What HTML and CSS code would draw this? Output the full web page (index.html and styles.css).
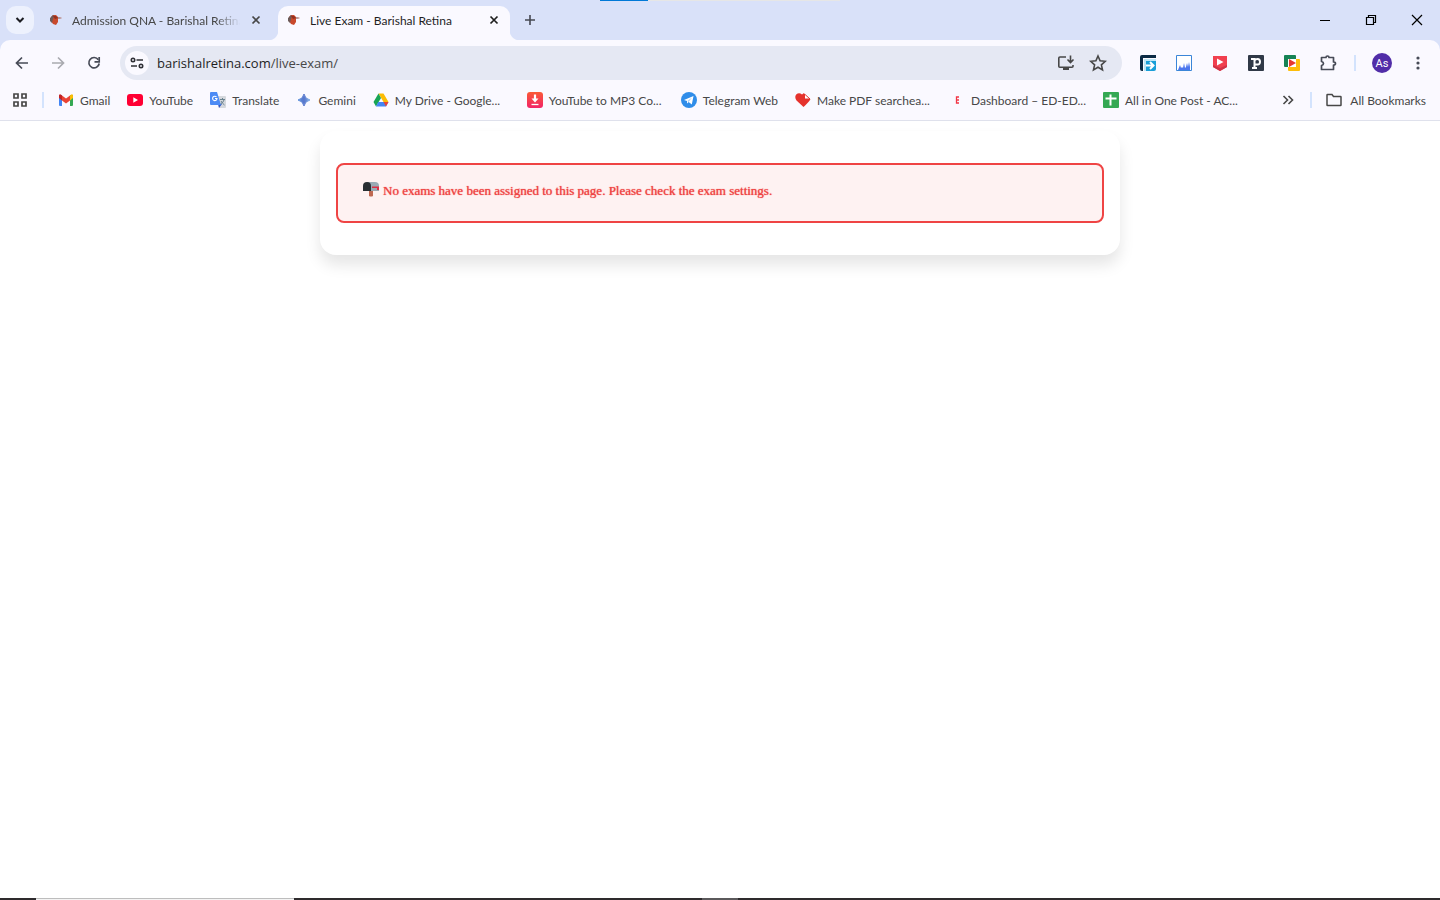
FILE: index.html
```html
<!DOCTYPE html>
<html lang="en">
<head>
    <meta charset="UTF-8">
    <title>Live Exam - Barishal Retina</title>
    <link rel="stylesheet" href="styles.css">
</head>
<body>
    <svg class="defs" width="0" height="0">
        <symbol id="bird" viewBox="0 0 16 16">
            <path d="M3 5 5 3 8 3 10 5 14 6 10 7 10 10 8 13 5 12 3 9z" fill="#c9492c"/>
            <path d="M2 6 5 3 6 4 5 7 4 11 2 9z" fill="#6d5a58"/>
            <path d="M5 4h3l2 2-3 1z" fill="#93311f"/>
            <path d="M10 5l4 1-4 1z" fill="#a9a2aa"/>
        </symbol>
        <symbol id="cross" viewBox="0 0 16 16">
            <path d="M4.500 4.500l7 7m0-7l-7 7" fill="none" stroke="currentColor" stroke-width="1.700"/>
        </symbol>
    </svg>

    <header class="browser">
        <div class="progress"><div class="progress-val"></div></div>

        <div class="tabs">
            <button class="tab-search" aria-label="Search tabs">
                <svg width="16" height="16" viewBox="0 0 16 16"><path d="M4.500 6l3.500 3.500L11.500 6" fill="none" stroke="#1c1d22" stroke-width="2"/></svg>
            </button>
            <div class="tab">
                <svg class="icon"><use href="#bird"/></svg>
                <span class="tab-title fade">Admission QNA - Barishal Retina</span>
                <button class="tab-close" aria-label="Close tab"><svg class="icon"><use href="#cross"/></svg></button>
            </div>
            <div class="tab active">
                <svg class="icon"><use href="#bird"/></svg>
                <span class="tab-title">Live Exam - Barishal Retina</span>
                <button class="tab-close" aria-label="Close tab"><svg class="icon"><use href="#cross"/></svg></button>
            </div>
            <button class="new-tab" aria-label="New tab">
                <svg width="16" height="16" viewBox="0 0 16 16"><path d="M8 3v10M3 8h10" stroke="#454852" stroke-width="1.600"/></svg>
            </button>
            <div class="window-btns">
                <button aria-label="Minimize"><svg width="12" height="12" viewBox="0 0 12 12"><path d="M1 6.500h10" stroke="#000"/></svg></button>
                <button aria-label="Restore"><svg width="12" height="12" viewBox="0 0 12 12"><path d="M1.500 3.500h7v7h-7zM3.500 3V1.500h7v7H9" fill="none" stroke="#000" stroke-width="1.200"/></svg></button>
                <button aria-label="Close"><svg width="12" height="12" viewBox="0 0 12 12"><path d="M1 1l10 10M11 1L1 11" stroke="#000" stroke-width="1.200"/></svg></button>
            </div>
        </div>

        <div class="toolbar">
            <button class="nav-btn" aria-label="Back"><svg width="16" height="16" viewBox="0 0 16 16"><path d="M14 8H3M8 2.500L2.500 8 8 13.500" fill="none" stroke="#474b57" stroke-width="1.700"/></svg></button>
            <button class="nav-btn" aria-label="Forward"><svg width="16" height="16" viewBox="0 0 16 16"><path d="M2 8h11M8 2.500L13.500 8 8 13.500" fill="none" stroke="#a9aab0" stroke-width="1.700"/></svg></button>
            <button class="nav-btn" aria-label="Reload"><svg width="16" height="16" viewBox="0 0 16 16"><path d="M12.300 4.700A5.200 5.200 0 1 0 13.200 8.500" fill="none" stroke="#474b57" stroke-width="1.700"/><path d="M13.200 2v4.800H8.500" fill="none" stroke="#474b57" stroke-width="1.700"/></svg></button>
            <div class="address">
                <button class="site-info" aria-label="Site information">
                    <svg width="16" height="16" viewBox="0 0 16 16" fill="none" stroke="#2f3036" stroke-width="1.600"><circle cx="4" cy="5" r="1.700"/><path d="M7.500 5H14M2 11h6"/><circle cx="12" cy="11" r="1.700"/></svg>
                </button>
                <div class="url" role="textbox" aria-label="Address" contenteditable="true" spellcheck="false"><b>barishalretina.com</b>/live-exam/</div>
                <button class="addr-btn" aria-label="Install app">
                    <svg width="18" height="18" viewBox="0 0 18 18" fill="none" stroke="#474747" stroke-width="1.600"><path d="M9 3H3Q1.800 3 1.800 4v8.200q0 1 1 1H15q1 0 1-1V11M13.500 1.500v6.500M10.500 5.500l3 3 3-3"/><path d="M6 14.500h6" stroke-width="3"/></svg>
                </button>
                <button class="addr-btn" aria-label="Bookmark this tab">
                    <svg width="18" height="18" viewBox="0 0 18 18"><path d="M9 2l2.100 4.800 5.200.5-3.900 3.500 1.100 5.100L9 13.200l-4.500 2.700 1.100-5.100L1.700 7.300l5.200-.5z" fill="none" stroke="#474747" stroke-width="1.600"/></svg>
                </button>
            </div>
            <div class="extensions">
                <button aria-label="Tab export">
                    <svg class="icon" viewBox="0 0 16 16"><path d="M0 2Q0 0 2 0h14v3H3v13H2q-2 0-2-2z" fill="#0b2a45"/><path d="M4 4h12v2H6v10H4z" fill="#bfe6f5"/><path d="M6 6h10v8q0 2-2 2H6z" fill="#1a9fd8"/><path d="M6 10.500h7M10 7l3.500 3.500L10 14" fill="none" stroke="#fff" stroke-width="2"/></svg>
                </button>
                <button aria-label="Chart">
                    <svg class="icon" viewBox="0 0 16 16"><path d="M.5.5h15v15H.5z" fill="#fff" stroke="#3b86d8"/><path d="M2 15l2-5 1 3 1-1 1 1 1-5 1 5 1-1 1-4 1 4 1-5 1 5v3z" fill="#4d78ee"/></svg>
                </button>
                <button aria-label="Video">
                    <svg class="icon" viewBox="0 0 16 16"><path d="M1 1h14v11l-7 4-7-4z" fill="#f1404f"/><path d="M1 10l7 3 7-3v2l-7 4-7-4z" fill="#cf3447"/><path d="M5 3.500v7L11.500 7z" fill="#fff"/></svg>
                </button>
                <button aria-label="Picture in picture">
                    <svg class="icon" viewBox="0 0 16 16"><rect width="16" height="16" rx="1" fill="#303947"/><path d="M3 4h3.500v9M4 13h5M6.500 5.500Q7.500 4 9.500 4 12 4 12 6.800T9.500 9.500H7" fill="none" stroke="#fff" stroke-width="2"/></svg>
                </button>
                <button aria-label="Player">
                    <svg class="icon" viewBox="0 0 16 16"><rect width="12" height="12" rx="1" fill="#168355"/><rect x="4" y="4" width="12" height="12" rx="1" fill="#fdbd0a"/><path d="M4 4h8v8H4z" fill="#fff"/><path d="M5 4v8l7-4z" fill="#e63831"/></svg>
                </button>
                <button aria-label="Extensions">
                    <svg width="18" height="18" viewBox="0 0 18 18"><path d="M2.500 3.500h4.500Q7 2 8.500 2t1.500 1.500h4.500V8q2 0 2 1.500t-2 1.500v4.500h-12v-4q2-.5 2-2t-2-2z" fill="none" stroke="#474b57" stroke-width="1.700" stroke-linejoin="round"/></svg>
                </button>
            </div>
            <span class="line"></span>
            <button class="avatar">As</button>
            <button class="menu" aria-label="Menu"><svg width="16" height="16" viewBox="0 0 16 16" fill="#474b57"><circle cx="8" cy="3" r="1.600"/><circle cx="8" cy="8" r="1.600"/><circle cx="8" cy="13" r="1.600"/></svg></button>
        </div>

        <nav class="bookmarks">
            <button class="apps" aria-label="Apps"><svg class="icon" viewBox="0 0 16 16"><path d="M2 2h4v4H2zM10 2h4v4h-4zM2 10h4v4H2zM10 10h4v4h-4z" fill="none" stroke="#474747" stroke-width="1.700"/></svg></button>
            <span class="line"></span>
            <a href="#" class="bookmark">
                <svg class="icon" viewBox="0 0 16 16"><path d="M1 3h3v11H2q-1 0-1-1z" fill="#4285f4"/><path d="M12 3h3v10q0 1-1 1h-2z" fill="#34a853"/><path d="M12 3.500Q15 1 15 4v2l-3 2.500z" fill="#fbbc04"/><path d="M4 3.500Q1 1 1 4v2l3 2.500z" fill="#c5221f"/><path d="M4 3.500l4 3 4-3v5l-4 3-4-3z" fill="#ea4335"/></svg>
                <span>Gmail</span>
            </a>
            <a href="#" class="bookmark">
                <svg class="icon" viewBox="0 0 16 16"><rect y="2" width="16" height="12" rx="3" fill="#ff0033"/><path d="M6.300 5.300v5.400L11 8z" fill="#fff"/></svg>
                <span>YouTube</span>
            </a>
            <a href="#" class="bookmark">
                <svg class="icon" viewBox="0 0 16 16"><path d="M6 4h9q1 0 1 1v10q0 1-1 1H9z" fill="#d5d8dd"/><path d="M8 12h4l-3 4z" fill="#3158c8"/><path d="M1 0h6l4 13H1q-1 0-1-1V1q0-1 1-1z" fill="#4c8bf5"/><path d="M6.500 5A2.200 2.200 0 1 0 7 6.500H5" fill="none" stroke="#fff" stroke-width="1.100"/><path d="M10 7.500h5M12.500 6v1.500M14 8q-1 3-3.500 4M11 9q1 2 3.500 4" fill="none" stroke="#68818e"/></svg>
                <span>Translate</span>
            </a>
            <a href="#" class="bookmark">
                <svg class="icon" viewBox="0 0 16 16"><defs><linearGradient id="gem"><stop offset="0" stop-color="#5b91dc"/><stop offset=".5" stop-color="#5876cc"/><stop offset="1" stop-color="#7baee5"/></linearGradient></defs><path d="M8 2q1 5 6 6-5 1-6 6-1-5-6-6 5-1 6-6z" fill="url(#gem)" stroke="url(#gem)"/></svg>
                <span>Gemini</span>
            </a>
            <a href="#" class="bookmark long">
                <svg class="icon" viewBox="0 0 16 16"><path d="M5.500 1.500h5L15.500 10h-5z" fill="#fbbc04"/><path d="M5.500 1.500L8 6l-5 8.500L.5 10z" fill="#18a454"/><path d="M5.200 10h10.300L13 14.500H3z" fill="#4285f4"/><path d="M15.500 10L13 14.500 10.500 10z" fill="#ea4335"/></svg>
                <span>My Drive - Google...</span>
            </a>
            <a href="#" class="bookmark long">
                <svg class="icon" viewBox="0 0 16 16"><defs><linearGradient id="mp3" x2="0" y2="1"><stop offset="0" stop-color="#fa5a36"/><stop offset="1" stop-color="#f22468"/></linearGradient></defs><rect width="16" height="16" rx="3" fill="url(#mp3)"/><path d="M8 2.500V7" stroke="#fff" stroke-width="2.200"/><path d="M4.500 6.500h7L8 10.500z" fill="#fff"/><path d="M4.500 12.500h7" stroke="#fff" stroke-width="1.300"/></svg>
                <span>YouTube to MP3 Co...</span>
            </a>
            <a href="#" class="bookmark">
                <svg class="icon" viewBox="0 0 16 16"><circle cx="8" cy="8" r="8" fill="#2f8de9"/><path d="M3 8l9.500-4-1.700 8.500L7.700 10 6 11.500V9z" fill="#fff"/><path d="M6.500 9L11 5.500 7.500 10z" fill="#9ccbf6"/></svg>
                <span>Telegram Web</span>
            </a>
            <a href="#" class="bookmark long">
                <svg class="icon" viewBox="0 0 16 16"><path d="M8.500 15L1.500 8.500Q-.8 5 1.200 2.500 4 0 7 2.500L9 1l1 5.500 5.500.5Q14 10 8.500 15z" fill="#e5322d"/><path d="M9.500 2l5.500 5H9.500z" fill="#fff" stroke="#e5322d"/></svg>
                <span>Make PDF searchea...</span>
            </a>
            <a href="#" class="bookmark long">
                <svg class="icon" viewBox="0 0 16 16"><path d="M10 5H7.500v6H10M7.500 8H10" fill="none" stroke="#f23645" stroke-width="1.300"/></svg>
                <span>Dashboard – ED-ED...</span>
            </a>
            <a href="#" class="bookmark long">
                <svg class="icon" viewBox="0 0 16 16"><rect width="16" height="16" rx="1" fill="#34a853"/><path d="M7.500 2.500v11M2.500 6.500h11" stroke="#fff" stroke-width="2"/></svg>
                <span>All in One Post - AC...</span>
            </a>
            <button class="more" aria-label="More bookmarks"><svg class="icon" viewBox="0 0 16 16"><path d="M3.500 4l4 4-4 4M8.500 4l4 4-4 4" fill="none" stroke="#474747" stroke-width="1.600"/></svg></button>
            <span class="line"></span>
            <a href="#" class="bookmark all">
                <svg class="icon" viewBox="0 0 16 16"><path d="M1 3q0-.5.500-.5h4.500l1.500 2h7q.5 0 .5.500v8q0 .5-.5.500h-13q-.5 0-.5-.5z" fill="none" stroke="#474747" stroke-width="1.500"/></svg>
                <span>All Bookmarks</span>
            </a>
        </nav>
    </header>

    <main class="page">
        <div class="card">
            <div class="notice">
                <svg class="mailbox" width="16" height="16" viewBox="0 0 16 16"><path d="M6 8h4v7q-2 1-4 0z" fill="#bf6952"/><path d="M4 1h8q4 0 4 4v5H4z" fill="#9aaab4"/><path d="M0 5q0-4 4-4t4 4v5H0z" fill="#292f33"/><path d="M9 5.500h7V9h-2V7H9z" fill="#dd2e44"/></svg>
                <p>No exams have been assigned to this page. Please check the exam settings.</p>
            </div>
        </div>
    </main>

    <footer class="taskbar"><span class="task"></span><span class="handle"></span></footer>
</body>
</html>
```
FILE: styles.css
```css
*{
    box-sizing: border-box;
    margin: 0;
    padding: 0;
}

body{
    display: flex;
    flex-direction: column;
    min-height: 100vh;
    background: #fff;
    font-family: Lato, "Open Sans", sans-serif;
    font-size: 12px;
    color: #474747;
}

button{
    display: flex;
    align-items: center;
    justify-content: center;
    border: 0;
    background: none;
    font: inherit;
    color: inherit;
}

a{
    text-decoration: none;
    color: inherit;
}

svg{
    display: block;
    flex: none;
}

.defs{
    position: absolute;
}

.icon{
    width: 16px;
    height: 16px;
}

.browser{
    position: relative;
    background: #d9e1f9;
    border-bottom: 1px solid #dfe1ec;
}

.progress{
    position: absolute;
    top: 0;
    left: 50%;
    width: 240px;
    height: 1px;
    margin-left: -120px;
    background: #e6e6e6;
}

.progress-val{
    width: 20%;
    height: 1px;
    background: #0078d7;
}

/* tabs */
.tabs{
    display: flex;
    height: 40px;
    padding: 6px 0 0 6px;
}

.tab-search{
    width: 28px;
    height: 28px;
    margin-right: 4px;
    border-radius: 10px;
    background: #edf1fd;
}

.tab{
    position: relative;
    display: flex;
    align-items: center;
    gap: 8px;
    width: 240px;
    height: 34px;
    padding: 0 14px 6px 10px;
}

.tab.active{
    width: 232px;
    padding: 0 8px 6px 8px;
    border-radius: 10px 10px 0 0;
    background: #faf9ff;
    color: #1f1f1f;
}

.tab.active:before,
.tab.active:after{
    content: "";
    position: absolute;
    bottom: 0;
    width: 10px;
    height: 10px;
}

.tab.active:before{
    right: 100%;
    background: radial-gradient(circle at 0 0, #d9e1f9 10px, #faf9ff 11px);
}

.tab.active:after{
    left: 100%;
    background: radial-gradient(circle at 100% 0, #d9e1f9 10px, #faf9ff 11px);
}

.tab-title{
    flex: 1;
    overflow: hidden;
    white-space: nowrap;
}

.fade{
    -webkit-mask-image: linear-gradient(to left, transparent, #000 24px);
    mask-image: linear-gradient(to left, transparent, #000 24px);
}

.new-tab{
    width: 28px;
    height: 28px;
    margin-left: 6px;
}

.window-btns{
    display: flex;
    height: 28px;
    margin-left: auto;
}

.window-btns button{
    width: 46px;
}

/* toolbar */
.toolbar{
    display: flex;
    align-items: center;
    height: 46px;
    padding: 0 8px;
    border-radius: 10px 10px 0 0;
    background: #faf9ff;
}

.nav-btn{
    width: 28px;
    height: 28px;
    margin-right: 8px;
}

.address{
    display: flex;
    align-items: center;
    flex: 1;
    height: 34px;
    margin-left: 4px;
    padding: 0 8px 0 5px;
    border-radius: 17px;
    background: #e5e8f3;
}

.site-info{
    width: 24px;
    height: 24px;
    margin-right: 8px;
    border-radius: 50%;
    background: #faf9ff;
}

.url{
    flex: 1;
    outline: 0;
    font-family: "Open Sans", sans-serif;
    font-size: 13px;
    white-space: nowrap;
}

.url b{
    font-weight: normal;
    color: #1f1f1f;
}

.addr-btn{
    width: 32px;
    height: 32px;
}

.extensions{
    display: flex;
    margin-left: 8px;
}

.extensions button{
    width: 36px;
    height: 28px;
}

.line{
    width: 2px;
    height: 16px;
    background: #d3e3fd;
}

.toolbar .line{
    margin: 0 16px 0 8px;
}

.avatar{
    width: 20px;
    height: 20px;
    border-radius: 50%;
    background: #512da8;
    color: #fff;
    font-family: Roboto, sans-serif;
    font-size: 11px;
}

.menu{
    width: 28px;
    height: 28px;
    margin-left: 12px;
}

/* bookmarks */
.bookmarks{
    display: flex;
    align-items: center;
    height: 34px;
    padding: 0 14px 6px 12px;
    background: #faf9ff;
    white-space: nowrap;
}

.bookmarks .line{
    margin: 0 14px;
}

.bookmark{
    display: flex;
    align-items: center;
    gap: 6px;
    margin-right: 17px;
}

.bookmark.long{
    width: 137px;
}

.bookmark.all{
    gap: 8px;
    margin-right: 0;
}

.more{
    margin-left: auto;
}

/* page */
.page{
    flex: 1;
    padding: 10px 16px;
}

.card{
    max-width: 800px;
    margin: 0 auto;
    padding: 32px 16px;
    border-radius: 16px;
    background: #fff;
    box-shadow: 0 10px 15px rgba(0, 0, 0, 0.1);
}

.notice{
    display: flex;
    gap: 4px;
    padding: 16px 25px 20px;
    border: 2px solid #ef4444;
    border-radius: 8px;
    background: #fef2f2;
    color: #ef4444;
    font-family: "Liberation Serif", serif;
    font-size: 13px;
    line-height: 20px;
    text-shadow: 0 0 1px #ef4444;
}

.taskbar{
    display: flex;
    height: 2px;
    background: #2e2b2d;
}

.task{
    width: 258px;
    margin-left: 36px;
    border-top: 1px solid #bdbdbd;
    background: #f3f3f3;
}

.handle{
    width: 36px;
    margin-left: 408px;
    background: #5b595b;
}
```
